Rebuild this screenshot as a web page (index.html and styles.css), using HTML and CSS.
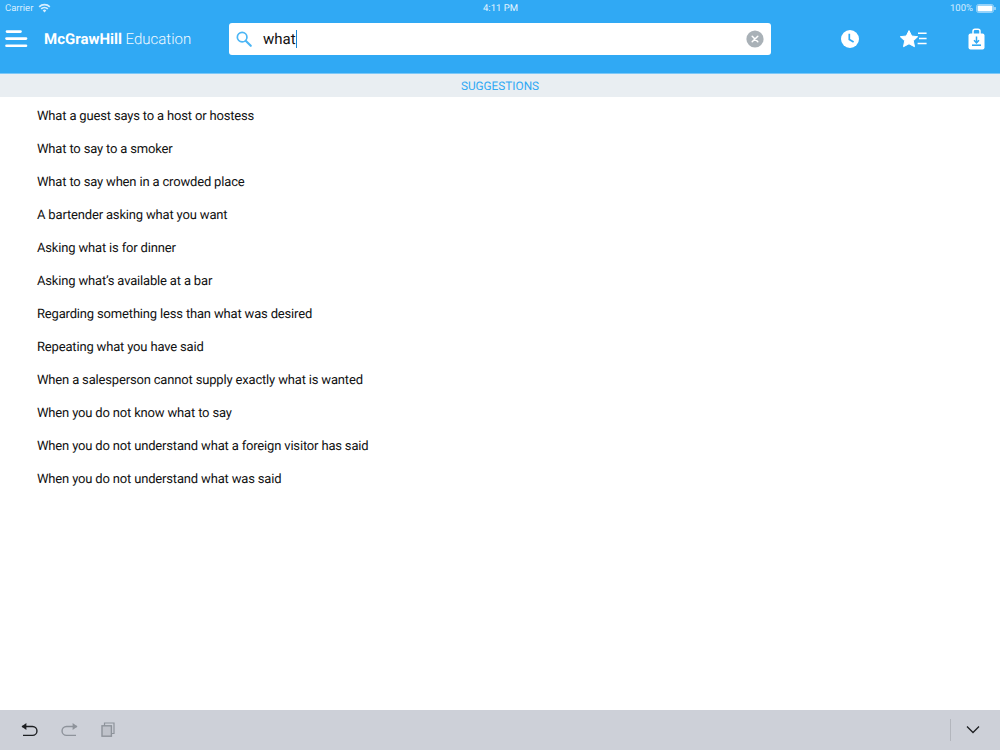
FILE: index.html
```html
<!DOCTYPE html>
<html lang="en">
<head>
<meta charset="utf-8">
<title>Suggestions</title>
<link rel="stylesheet" href="styles.css">
</head>
<body>
<div class="app">
  <header class="header">
    <div class="status">
      <div class="status-left">
        <span>Carrier</span>
        <svg class="wifi" width="13" height="10" viewBox="0 0 13 10"><path d="M0.6 3.2A8.4 8.4 0 0 1 12.4 3.2L11.2 4.5A6.6 6.6 0 0 0 1.8 4.5Z M2.6 5.3A5.5 5.5 0 0 1 10.4 5.3L9.2 6.6A3.8 3.8 0 0 0 3.8 6.6Z M4.7 7.4A2.6 2.6 0 0 1 8.3 7.4L6.5 9.4Z" fill="#d6eeff"/></svg>
      </div>
      <div class="status-time">4:11 PM</div>
      <div class="status-right">
        <span>100%</span>
        <svg width="20" height="9" viewBox="0 0 20 9"><rect x="0.5" y="0.5" width="17" height="8" rx="2" fill="none" stroke="#d6eeff" stroke-opacity=".6"/><rect x="1.5" y="1.5" width="15" height="6" rx="1" fill="#fff"/><rect x="18.4" y="3" width="1.2" height="3" rx=".6" fill="#d6eeff"/></svg>
      </div>
    </div>
    <div class="nav">
      <svg class="menu" width="24" height="18" viewBox="0 0 24 18"><g stroke="#fff" stroke-width="2.6" stroke-linecap="round"><path d="M2 1.6H15.5"/><path d="M1.5 8.6H21"/><path d="M1.5 15.8H21"/></g></svg>
      <div class="brand"><b>McGrawHill</b> Education</div>
      <div class="search">
        <svg class="search-icon" width="16" height="16" viewBox="0 0 18 18"><circle cx="6.9" cy="6.9" r="5.4" fill="none" stroke="#4cb6f5" stroke-width="1.9"/><path d="M10.9 10.9L16.6 16.6" stroke="#4cb6f5" stroke-width="2.4" stroke-linecap="round"/></svg>
        <div class="query">what<span class="caret"></span></div>
        <svg width="18" height="18" viewBox="0 0 18 18"><circle cx="9" cy="9" r="8.6" fill="#a9b1b7"/><path d="M6.2 6.2L11.8 11.8M11.8 6.2L6.2 11.8" stroke="#fff" stroke-width="1.5" stroke-linecap="round"/></svg>
      </div>
      <div class="actions">
        <svg class="act-clock" width="18" height="18" viewBox="0 0 18 18"><circle cx="9" cy="9" r="9" fill="#fff"/><path d="M8.3 3.8V9.4L12.6 12" fill="none" stroke="#30a9f4" stroke-width="1.7"/></svg>
        <svg class="act-star" width="27" height="18" viewBox="0 0 27 18"><path d="M9 0.6L11.7 6L17.7 6.7L13.3 10.8L14.5 16.7L9 13.8L3.5 16.7L4.7 10.8L0.3 6.7L6.3 6Z" fill="#fff" stroke="#fff" stroke-linejoin="round"/><path d="M18 3.2H26.6M19 8.4H26.6M17.6 13.4H26.6" stroke="#fff" stroke-width="1.5"/></svg>
        <svg class="act-bag" width="17" height="22" viewBox="0 0 17 22"><path d="M5 6V3.2A2 2 0 0 1 7 1.2H10A2 2 0 0 1 12 3.2V6" fill="none" stroke="#fff" stroke-width="1.5"/><rect x="0.5" y="5.6" width="16" height="15.9" rx="2" fill="#fff"/><path d="M8.5 8.6V14.4M6 12.2L8.5 14.8L11 12.2" fill="none" stroke="#30a9f4" stroke-width="1.5"/><path d="M4 17.2H13" stroke="#30a9f4" stroke-width="1.6"/></svg>
      </div>
    </div>
  </header>
  <div class="band">SUGGESTIONS</div>
  <ul class="list">
    <li>What a guest says to a host or hostess</li>
    <li>What to say to a smoker</li>
    <li>What to say when in a crowded place</li>
    <li>A bartender asking what you want</li>
    <li>Asking what is for dinner</li>
    <li>Asking what’s available at a bar</li>
    <li>Regarding something less than what was desired</li>
    <li>Repeating what you have said</li>
    <li>When a salesperson cannot supply exactly what is wanted</li>
    <li>When you do not know what to say</li>
    <li>When you do not understand what a foreign visitor has said</li>
    <li>When you do not understand what was said</li>
  </ul>
  <footer class="toolbar">
    <div class="tools">
      <svg width="17" height="15" viewBox="0 0 17 15"><path d="M1 4.5H11.5A4.4 4.4 0 0 1 11.5 13.4H2" fill="none" stroke="#1d1f22" stroke-width="1.4"/><path d="M0.5 4.5L5.4 1V8Z" fill="#1d1f22"/></svg>
      <svg width="17" height="15" viewBox="0 0 17 15"><path d="M16 4.5H5.5A4.4 4.4 0 0 0 5.5 13.4H15" fill="none" stroke="#8e939b" stroke-width="1.4"/><path d="M16.5 4.5L11.6 1V8Z" fill="#8e939b"/></svg>
      <svg width="14" height="15" viewBox="0 0 14 15"><rect x="1" y="3.8" width="9.4" height="10.4" fill="#bfc2ca" stroke="#8e939b" stroke-width="1.4"/><path d="M3.5 3.8V1H13V11.5H10.4" fill="none" stroke="#8e939b" stroke-width="1.2"/></svg>
    </div>
    <div class="divider"></div>
    <svg class="chev" width="14" height="9" viewBox="0 0 14 9"><path d="M1 1.5L7 7.5L13 1.5" fill="none" stroke="#1d1f22" stroke-width="1.3"/></svg>
  </footer>
</div>
</body>
</html>
```

FILE: styles.css
```css
* { box-sizing: border-box; }
html, body { margin: 0; padding: 0; height: 100%; }
body { font-family: Roboto, "Liberation Sans", sans-serif; background: #fff; color: #111; overflow: hidden; text-rendering: geometricPrecision; }
.app { height: 750px; display: flex; flex-direction: column; }

.header { height: 74px; flex: none; background: #30a9f4; border-bottom: 1px solid #7cc8f8; color: #fff; display: flex; flex-direction: column; }
.status { height: 16px; padding: 0 4px 0 5px; display: grid; grid-template-columns: 1fr auto 1fr; align-items: center; font-size: 9.5px; color: #d6eeff; }
.status-left { display: flex; align-items: center; gap: 5px; }
.status-time { color: #e6f5ff; }
.status-right { display: flex; justify-content: flex-end; align-items: center; gap: 3px; }

.nav { height: 46px; display: flex; align-items: center; padding: 0 15px 0 5px; }
.menu { flex: none; }
.brand { width: 185px; margin-left: 15px; font-size: 15px; white-space: nowrap; color: #f0f9ff; font-weight: 300; }
.brand b { font-weight: 700; color: #fff; }

.search { width: 542px; height: 32px; background: #fff; border-radius: 3px; display: flex; align-items: center; padding: 0 7px; flex: none; }
.search-icon { flex: none; }
.query { flex: 1; margin-left: 11px; font-size: 15px; color: #111; display: flex; align-items: center; }
.caret { width: 1.5px; height: 18px; background: #1a87d6; }

.actions { flex: 1; display: flex; align-items: center; justify-content: flex-end; gap: 41px; }

.band { height: 23px; flex: none; background: #e9eef2; color: #30a9f4; font-size: 11.8px; display: flex; align-items: center; justify-content: center; }

.list { list-style: none; margin: 0; padding: 3px 0 0 37px; flex: 1; }
.list li { height: 33px; line-height: 33px; font-size: 13px; letter-spacing: -0.17px; white-space: nowrap; }

.toolbar { height: 40px; flex: none; background: #cdd0d8; display: flex; align-items: center; padding: 0 20px 1px 21px; }
.tools { display: flex; align-items: center; gap: 23px; flex: 1; }
.divider { width: 1px; height: 22px; background: #b3b6bd; margin-right: 15px; }
.chev { flex: none; }
```
